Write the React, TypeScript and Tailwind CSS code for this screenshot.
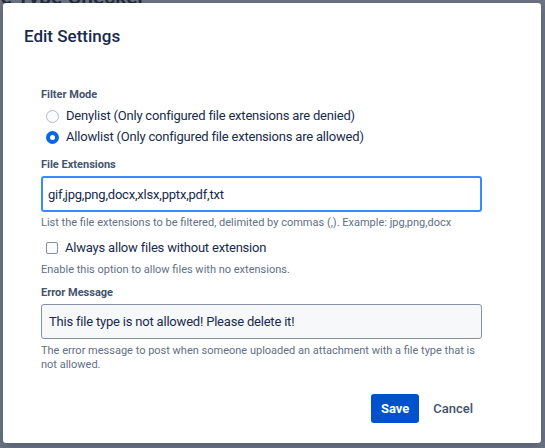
import React, { useState } from "react";

const font = { fontFamily: "Roboto, 'Liberation Sans', sans-serif" };

function Radio({ checked, label }: { checked: boolean; label: string }) {
    return (
        <label className="flex h-5 items-center gap-[7px] pl-[5px] text-[13px] tracking-[-0.2px] text-[#172b4d]">
            {checked ? (
                <span className="flex h-[13px] w-[13px] items-center justify-center rounded-full bg-[#0c66e4]">
                    <span className="h-[5px] w-[5px] rounded-full bg-white" />
                </span>
            ) : (
                <span className="h-[13px] w-[13px] rounded-full border border-[#b3b9c4] bg-[#fafbfc]" />
            )}
            <span>{label}</span>
        </label>
    );
}

export default function App() {
    const [exts, setExts] = useState("gif,jpg,png,docx,xlsx,pptx,pdf,txt");
    const [msg, setMsg] = useState("This file type is not allowed! Please delete it!");

    return (
        <div className="relative h-[448px] w-[545px] overflow-hidden bg-[#6d7483] p-[3px]" style={font}>
            {/* page heading behind the overlay */}
            <div className="absolute right-[400px] top-[-13px] whitespace-nowrap text-[21px] leading-none font-semibold text-[#262b36]">
                File Type Checker
            </div>

            <div className="relative flex h-[440px] w-[538px] flex-col rounded-[3px] bg-white pb-5 shadow-[0_4px_12px_rgba(9,30,66,0.25)]">
                <h1 className="ml-[21px] mt-[21px] h-6 text-[17px] leading-6 font-medium text-[#172b4d]">
                    Edit Settings
                </h1>

                <div className="ml-[38px] flex w-[441px] flex-col">
                    <div className="mt-[39px] h-4 text-[11px] leading-4 font-bold text-[#44546f]">Filter Mode</div>
                    <div className="mt-[3px] flex flex-col gap-px">
                        <Radio checked={false} label="Denylist (Only configured file extensions are denied)" />
                        <Radio checked={true} label="Allowlist (Only configured file extensions are allowed)" />
                    </div>

                    <div className="mt-[10px] h-4 text-[11px] leading-4 font-bold text-[#44546f]">File Extensions</div>
                    <input
                        value={exts}
                        onChange={(e) => setExts(e.target.value)}
                        className="mt-[3px] h-9 w-full rounded-[3px] border-2 border-[#388bff] bg-white px-[5px] text-[13px] tracking-[-0.2px] text-[#172b4d] outline-none"
                        style={font}
                    />
                    <div className="mt-[3px] h-4 whitespace-nowrap text-[11px] leading-4 text-[#626f86]">
                        List the file extensions to be filtered, delimited by commas (,). Example: jpg,png,docx
                    </div>

                    <label className="mt-[7px] flex h-5 items-center gap-[7px] pl-[5px] text-[13px] tracking-[-0.2px] text-[#172b4d]">
                        <span className="h-[12px] w-[12px] rounded-[2px] border border-[#8590a2] bg-[#fafbfc]" />
                        <span>Always allow files without extension</span>
                    </label>
                    <div className="mt-[4px] h-4 text-[11px] leading-4 text-[#626f86]">
                        Enable this option to allow files with no extensions.
                    </div>

                    <div className="mt-[7px] h-4 text-[11px] leading-4 font-bold text-[#44546f]">Error Message</div>
                    <input
                        value={msg}
                        onChange={(e) => setMsg(e.target.value)}
                        className="mt-[3px] h-[35px] w-full rounded-[3px] border border-[#8590a2] bg-[#f7f8f9] px-[7px] text-[13px] tracking-[-0.2px] text-[#172b4d] outline-none"
                        style={font}
                    />
                    <div className="mt-[5px] text-[11px] leading-[14px] text-[#626f86]">
                        The error message to post when someone uploaded an attachment with a file type that is not allowed.
                    </div>

                    <div className="mt-[22px] flex items-center justify-end gap-[14px] pr-[9px]">
                        <button className="h-[29px] w-[48px] rounded-[3px] bg-[#0052cc] text-[13px] font-bold text-white">
                            Save
                        </button>
                        <button className="h-[29px] text-[13px] font-medium text-[#42526e]">Cancel</button>
                    </div>
                </div>
            </div>
        </div>
    );
}
